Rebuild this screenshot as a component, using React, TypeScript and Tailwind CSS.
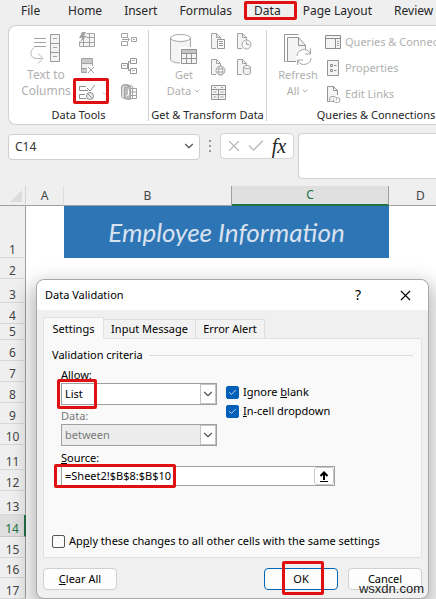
import type { ReactNode } from "react"
import { useState } from "react"
import { Check, ChevronDown, X } from "lucide-react"

const TABS = ["File", "Home", "Insert", "Formulas", "Data", "Page Layout", "Review"]

const ROWS = [
  { n: 2, height: "h-[21px]" },
  { n: 3, height: "h-[24px]" },
  { n: 4, height: "h-[21px]" },
  { n: 5, height: "h-[16px]" },
  { n: 6, height: "h-[21px]" },
  { n: 7, height: "h-[21px]" },
  { n: 8, height: "h-[21px]" },
  { n: 9, height: "h-[21px]" },
  { n: 10, height: "h-[21px]" },
  { n: 11, height: "h-[25px]" },
  { n: 12, height: "h-[21px]" },
  { n: 13, height: "h-[24px]" },
  { n: 14, height: "h-[22px]" },
  { n: 15, height: "h-[21px]" },
  { n: 16, height: "h-[20px]" },
  { n: 17, height: "h-[21px]" },
]

// Red frame drawn over the step that has to be clicked
function Highlight({ className }: { className: string }) {
  return <span className={`absolute z-10 border-3 border-[#e01010] rounded-[2px] pointer-events-none ${className}`} />
}

function Art({ w, h, children }: { w: number; h: number; children: ReactNode }) {
  return (
    <svg width={w} height={h} viewBox={`0 0 ${w} ${h}`} fill="none" stroke="#a3a3a3" strokeWidth="1" aria-hidden="true">
      {children}
    </svg>
  )
}

function TextToColumnsIcon() {
  return (
    <Art w={32} h={32}>
      <path d="M4 4.500h12M4 8.500h12M4 12.500h12" />
      <path d="M20.500 .5h9v27h-9zM20.500 9.500h9M20.500 18.500h9" fill="#f3f3f3" stroke="#999" />
      <path d="M23 4.500h4M23 13.500h4M23 22.500h4" />
      <path d="M4 13.500C-.5 17 0 24 6 24.500h6M8 19.500l5 5-5 5" stroke="#b8b8b8" />
    </Art>
  )
}

function FlashFillIcon() {
  return (
    <Art w={16} h={16}>
      <path d="M7.500 1.500h8v13h-15v-5M.5 10.500h15M4.500 6v8.500M10.500 1.500v13M7.500 5.500h8" fill="#f3f3f3" />
      <path d="M3 0h4L5 4h3L1 10l2-4H0z" fill="#a3a3a3" stroke="none" />
    </Art>
  )
}

function RemoveDuplicatesIcon() {
  return (
    <Art w={16} h={16}>
      <path d="M2.500.5h11v14h-11z" fill="#f0f0f0" />
      <path d="M3 1h10v4H3zM3 10h6v4H3z" fill="#c9c9c9" stroke="none" />
      <path d="M2.500 5.500h11M2.500 10.500h7" />
      <path d="M8 8h8v8H8z" fill="#fff" stroke="none" />
      <path d="M9 9l6 6M15 9l-6 6" />
    </Art>
  )
}

function ValidationIcon() {
  return (
    <Art w={16} h={16}>
      <path d="M7 2.500H.5v4H9M6 10.500H.5v4H7M8 4l3 3 5-6" stroke="#8f8f8f" />
      <circle cx="11" cy="12" r="3.500" fill="#eee" stroke="#8f8f8f" />
      <path d="M8.500 9.500l5 5" stroke="#8f8f8f" />
    </Art>
  )
}

function ConsolidateIcon() {
  return (
    <Art w={16} h={16}>
      <path d="M.5 1.500h6v4h-6zM.5 9.500h6v4h-6zM10.500 5.500h5v4h-5zM1 7.500h7M6.500 5.500l2 2-2 2M12 7.500h2" />
    </Art>
  )
}

function RelationshipsIcon() {
  return (
    <Art w={16} h={16}>
      <path d="M9.500.5h6v5h-6zM9.500 10.500h6v5h-6zM.5 5.500h6v5h-6zM6.500 8.500h1M9.500 3.500h-2v9h2" stroke="#949494" />
      <path d="M11 2.500h3M11 12.500h3M2 7.500h3" stroke="#b0b0b0" />
    </Art>
  )
}

function DataModelIcon() {
  return (
    <Art w={16} h={16}>
      <path d="M.5 3v9c0 2 3 3 7 3V1C3 0 .5 1 .5 3z" fill="#ddd" />
      <path d="M7.500 4.500h8v10h-8M11.500 4v11M8 8h8M8 11.500h8M.5 3C3 .5 10 .5 12 3v1.500" />
      <path d="M3.500 3.500l6-1v13l-6-1z" fill="#bbb" />
      <path d="M7.500 5.500v5q0 2-2 1" stroke="#fff" />
    </Art>
  )
}

function GetDataIcon() {
  return (
    <Art w={28} h={31}>
      <path d="M.5 4v21c0 3 5 4 10 4s10-1 10-4V4" fill="#f4f4f4" />
      <ellipse cx="10.500" cy="4" rx="10" ry="3.500" fill="#fff" />
      <path d="M10 13h18v18H10z" fill="#fff" stroke="none" />
      <path d="M11.500 15.500h15v14h-15z" fill="#f4f4f4" stroke="#949494" />
      <path d="M11.500 15.500h15v4h-15z" fill="#c4c4c4" stroke="#949494" />
      <path d="M16.500 19v10.500M21.500 19v10.500M11.500 24.500h15" stroke="#949494" />
    </Art>
  )
}

function PageShape() {
  return (
    <>
      <path d="M5 15.500H.5V.5h5l4 4V7" fill="#f4f4f4" />
      <path d="M5.500.5v4h4" />
    </>
  )
}

function TextSourceIcon() {
  return (
    <Art w={15} h={17}>
      <PageShape />
      <path d="M6.500 6.500h7v9h-7zM8 8.500h4M8 10.500h4M8 12.500h4" fill="#fff" stroke="#969696" />
    </Art>
  )
}

function RecentSourceIcon() {
  return (
    <Art w={15} h={17}>
      <PageShape />
      <circle cx="9.500" cy="11.500" r="4.500" fill="#f8f8f8" />
      <path d="M9.500 8.500v3h3" />
    </Art>
  )
}

function WebSourceIcon() {
  return (
    <Art w={15} h={17}>
      <PageShape />
      <circle cx="9.500" cy="11.500" r="4.500" fill="#fff" />
      <ellipse cx="9.500" cy="11.500" rx="2" ry="4.500" />
      <path d="M5.500 10h8M5.500 13h8" />
    </Art>
  )
}

function DatabaseSourceIcon() {
  return (
    <Art w={15} h={17}>
      <PageShape />
      <path d="M6.500 8v6c0 2 7 2 7 0V8" fill="#f0f0f0" />
      <ellipse cx="10" cy="8" rx="3.500" ry="1.500" fill="#fff" />
    </Art>
  )
}

function TableSourceIcon() {
  return (
    <Art w={15} h={16}>
      <path d="M.5.5h14v14H.5zM.5 4.500h14M.5 9.500h14M7.500 4.500v10" fill="#f4f4f4" stroke="#949494" />
      <path d="M3 2.500h2M10 2.500h2M2.500 7h3M9.500 7h3M2.500 12h3M9.500 12h3" />
    </Art>
  )
}

function RefreshIcon() {
  return (
    <Art w={28} h={31}>
      <path d="M2.500 27.500h-2V.5h14" stroke="#949494" />
      <path d="M12 27.500H3.500v-24h11l7 8V15" fill="#f4f4f4" stroke="#949494" />
      <path d="M14.500 3.500v8h7" stroke="#949494" />
      <circle cx="20" cy="23" r="8" fill="#fff" stroke="none" />
      <path d="M13 22a7 7 0 0 1 13-3M26.500 14.500V20H21M27 24a7 7 0 0 1-13 3M13.500 31v-5H19" />
    </Art>
  )
}

function QueriesIcon() {
  return (
    <Art w={16} h={15}>
      <path d="M.5.5h15v13H.5zM.5 3.500h15M10.500 3.500v10" fill="#f4f4f4" stroke="#8c8c8c" />
      <path d="M12 6.500h2M12 8.500h2M12 10.500h2" />
    </Art>
  )
}

function PropertiesIcon() {
  return (
    <Art w={16} h={16}>
      <path d="M2.500.5h11v15h-11z" fill="#f4f4f4" stroke="#949494" />
      <path d="M5.500 4.500h2v2h-2zM5.500 9.500h2v2h-2zM9 5.500h2.500M9 10.500h2.500" stroke="#8c8c8c" />
    </Art>
  )
}

function EditLinksIcon() {
  return (
    <Art w={16} h={17}>
      <path d="M5 15.500H2.500V.5h6l4 4V9" fill="#f4f4f4" stroke="#949494" />
      <path d="M8.500.5v4h4" stroke="#949494" />
      <path d="M9 15.500H7a2.500 2.500 0 0 1 0-5h2a2.500 2.500 0 0 1 2 4M11.500 11.500h1a2.500 2.500 0 0 1 0 5h-2a2.500 2.500 0 0 1-1.500-4" />
    </Art>
  )
}

function ToolButton({ label, children }: { label: string; children: ReactNode }) {
  return (
    <button type="button" aria-label={label} className="flex h-4 items-center">
      {children}
    </button>
  )
}

function BigButton({ icon, lines, menu, className }: { icon: ReactNode; lines: string[]; menu?: boolean; className: string }) {
  return (
    <button type="button" className={`flex flex-col items-center leading-4 text-[#b0b0b0] ${className}`}>
      <span className="h-[33px]">{icon}</span>
      <span>{lines[0]}</span>
      <span className="flex items-center gap-0.5">
        {lines[1]}
        {menu && <ChevronDown size={8} strokeWidth={3} />}
      </span>
    </button>
  )
}

function LinkButton({ icon, label }: { icon: ReactNode; label: string }) {
  return (
    <button type="button" className="flex h-[18px] items-center gap-1 whitespace-nowrap">
      {icon}
      {label}
    </button>
  )
}

function Group({ title, className, children }: { title: string; className: string; children: ReactNode }) {
  return (
    <section className={`flex shrink-0 flex-col justify-between ${className}`}>
      <div className="flex">{children}</div>
      <h2 className="text-center leading-3 whitespace-nowrap text-[#262626]">{title}</h2>
    </section>
  )
}

function Ribbon() {
  return (
    <div className="ml-2 flex h-[100px] overflow-hidden rounded-l-lg border border-r-0 border-[#d0d0d0] bg-white pt-1 pb-[3px] text-[11px]">
      <Group title="Data Tools" className="w-[140px] border-r border-[#d0d0d0]">
        <BigButton icon={<TextToColumnsIcon />} lines={["Text to", "Columns"]} className="w-[66px] pt-1 pl-2 text-xs leading-4" />
        <div className="flex w-[42px] flex-col gap-2.5 pt-0.5 pl-1">
          <ToolButton label="Flash Fill"><FlashFillIcon /></ToolButton>
          <ToolButton label="Remove Duplicates"><RemoveDuplicatesIcon /></ToolButton>
          <div className="relative flex">
            <ToolButton label="Data Validation"><ValidationIcon /></ToolButton>
            <ChevronDown size={7} className="mt-1.5 ml-1.5 text-[#a3a3a3]" />
            <Highlight className="-top-1.5 -left-1.5 h-[26px] w-9" />
          </div>
        </div>
        <div className="flex flex-col gap-2.5 pt-0.5 pl-1">
          <ToolButton label="Consolidate"><ConsolidateIcon /></ToolButton>
          <ToolButton label="Relationships"><RelationshipsIcon /></ToolButton>
          <ToolButton label="Manage Data Model"><DataModelIcon /></ToolButton>
        </div>
      </Group>
      <Group title="Get & Transform Data" className="w-[118px] border-r border-[#d0d0d0]">
        <BigButton icon={<GetDataIcon />} lines={["Get", "Data"]} menu className="w-[62px] pt-1 pl-2" />
        <div className="grid grid-cols-[26px_16px] content-start gap-y-2.5 pt-[3px]">
          <ToolButton label="From Text/CSV"><TextSourceIcon /></ToolButton>
          <ToolButton label="Recent Sources"><RecentSourceIcon /></ToolButton>
          <ToolButton label="From Web"><WebSourceIcon /></ToolButton>
          <ToolButton label="Existing Connections"><DatabaseSourceIcon /></ToolButton>
          <ToolButton label="From Table/Range"><TableSourceIcon /></ToolButton>
        </div>
      </Group>
      <Group title="Queries & Connections" className="w-[218px]">
        <BigButton icon={<RefreshIcon />} lines={["Refresh", "All"]} menu className="w-[58px] pt-1 pl-1" />
        <div className="flex flex-col gap-2 pt-[3px] text-[#b0b0b0]">
          <LinkButton icon={<QueriesIcon />} label="Queries & Connections" />
          <LinkButton icon={<PropertiesIcon />} label="Properties" />
          <LinkButton icon={<EditLinksIcon />} label="Edit Links" />
        </div>
      </Group>
    </div>
  )
}

function FormulaBar() {
  return (
    <div className="flex h-[53px] items-start pl-2">
      <div className="relative w-48">
        <input
          aria-label="Name Box"
          defaultValue="C14"
          className="h-[26px] w-full rounded-[4px] border border-[#cfcfcf] bg-white pl-1.5 text-xs text-[#333]"
        />
        <ChevronDown size={14} className="pointer-events-none absolute top-1.5 right-1 text-[#555]" />
      </div>
      <div className="flex h-[26px] w-5 flex-col items-center justify-center gap-[3px]">
        <i className="size-0.5 bg-[#999]" />
        <i className="size-0.5 bg-[#999]" />
        <i className="size-0.5 bg-[#999]" />
      </div>
      <div className="flex h-[26px] w-[74px] items-center justify-between rounded-[4px] border border-[#d4d4d4] bg-white px-1">
        <button type="button" aria-label="Cancel entry"><X size={18} strokeWidth={1.5} className="text-[#b5b5b5]" /></button>
        <button type="button" aria-label="Enter"><Check size={20} strokeWidth={1.5} className="text-[#b5b5b5]" /></button>
        <button type="button" className="w-5 font-['Liberation_Serif',serif] text-xl leading-5 text-[#222] italic">fx</button>
      </div>
      <textarea
        aria-label="Formula"
        className="ml-1 h-[46px] min-w-0 flex-1 resize-none rounded-l-[4px] border border-r-0 border-[#cfcfcf] bg-white"
      />
    </div>
  )
}

function Sheet() {
  return (
    <table className="w-full table-fixed border-separate border-spacing-0 bg-white text-xs text-[#444]">
      <colgroup>
        <col className="w-[26px]" />
        <col className="w-[38px]" />
        <col className="w-[168px]" />
        <col className="w-[157px]" />
        <col />
      </colgroup>
      <thead>
        <tr className="h-5 bg-[#efefef] leading-4">
          <th className="border-r border-b border-r-[#d4d4d4] border-b-[#a0a0a0] p-0">
            <svg width="12" height="12" viewBox="0 0 12 12" className="ml-2.5" aria-hidden="true">
              <path d="M12 0v12H0z" fill="#dcdcdc" />
            </svg>
          </th>
          <th className="border-r border-b border-r-[#dcdcdc] border-b-[#a0a0a0] p-0 font-normal">A</th>
          <th className="border-r border-b border-[#a0a0a0] p-0 font-normal">B</th>
          <th className="border-r border-b-2 border-r-[#a0a0a0] border-b-[#217346] bg-[#e0e0e0] p-0 font-normal text-[#217346]">C</th>
          <th className="border-b border-[#a0a0a0] p-0 pl-4 font-normal">D</th>
        </tr>
      </thead>
      <tbody className="leading-[15px]">
        <tr className="h-[52px]">
          <th className="border-r border-b border-r-[#a0a0a0] border-b-[#d8d8d8] bg-[#efefef] p-0 align-bottom font-normal">1</th>
          <td />
          <td colSpan={2} className="bg-[#2e75b6] p-0 text-center font-['Lato',sans-serif] text-[26px] leading-8 text-[#d9e2ef] italic">
            Employee Information
          </td>
          <td />
        </tr>
        {ROWS.map((row) => (
          <tr key={row.n} className={row.height}>
            <th
              className={
                row.n === 14
                  ? "border-r-2 border-b border-r-[#217346] border-b-[#c8c8c8] bg-[#dedede] p-0 align-bottom font-normal text-[#217346]"
                  : "border-r border-b border-r-[#a0a0a0] border-b-[#d8d8d8] bg-[#efefef] p-0 align-bottom font-normal"
              }
            >
              {row.n}
            </th>
            <td colSpan={4} className="p-0" />
          </tr>
        ))}
      </tbody>
    </table>
  )
}

function SelectBox({ id, options, disabled }: { id: string; options: string[]; disabled?: boolean }) {
  return (
    <div className="relative w-[156px]">
      <select
        id={id}
        disabled={disabled}
        className="h-[22px] w-full appearance-none border border-[#a0a0a0] bg-white pl-[3px] leading-4 text-black disabled:bg-[#ececec] disabled:text-[#7a7a7a] disabled:opacity-100"
      >
        {options.map((option) => (
          <option key={option}>{option}</option>
        ))}
      </select>
      <span className="pointer-events-none absolute inset-y-px right-px flex w-4 items-center justify-center border border-[#c4c4c4] bg-white">
        <ChevronDown size={14} strokeWidth={2} className="shrink-0 text-[#555]" />
      </span>
    </div>
  )
}

function CheckBox({ checked, onChange, children }: { checked: boolean; onChange: (value: boolean) => void; children: ReactNode }) {
  return (
    <label className="flex items-center gap-1">
      <span className="relative flex size-[13px] items-center justify-center">
        <input
          type="checkbox"
          checked={checked}
          onChange={(e) => onChange(e.target.checked)}
          className="size-[13px] appearance-none rounded-[2px] border border-[#555] bg-[#fafafa] checked:border-[#005fb8] checked:bg-[#005fb8]"
        />
        {checked && <Check size={9} strokeWidth={2} className="pointer-events-none absolute text-white" />}
      </span>
      <span className="whitespace-nowrap">{children}</span>
    </label>
  )
}

function ValidationDialog() {
  const [ignoreBlank, setIgnoreBlank] = useState(true)
  const [inCell, setInCell] = useState(true)
  const [applyAll, setApplyAll] = useState(false)

  return (
    <div
      role="dialog"
      aria-label="Data Validation"
      className="absolute top-[279px] right-[7px] left-[36px] rounded-lg border border-[#a8a8a8] bg-[#f0f0f0] text-[11px] leading-4 text-black shadow-[0_10px_20px_6px_rgba(0,0,0,0.26)]"
    >
      <header className="flex h-[30px] items-center rounded-t-lg bg-white pr-3.5 pl-2">
        <h1 className="flex-1">Data Validation</h1>
        <button type="button" aria-label="Help" className="mr-9 text-sm leading-4">?</button>
        <button type="button" aria-label="Close"><X size={17} strokeWidth={1.5} /></button>
      </header>

      <div className="px-[6px] pt-[7px] pb-2">
        <div role="tablist" className="flex items-end">
          <button type="button" role="tab" aria-selected="true" className="relative z-[1] -mb-px h-[22px] w-[61px] border border-b-0 border-[#e2e2e2] bg-[#f9f9f9]">
            Settings
          </button>
          <button type="button" role="tab" aria-selected="false" className="h-[19px] w-[92px] border-t border-r border-[#dedede] bg-[#f2f2f2]">Input Message</button>
          <button type="button" role="tab" aria-selected="false" className="h-[19px] w-[69px] border-t border-r border-[#dedede] bg-[#f2f2f2]">Error Alert</button>
        </div>

        <div className="border border-[#e2e2e2] bg-[#f9f9f9] px-2 pt-2 pb-2">
          <div className="flex items-center gap-1.5">
            <span>Validation criteria</span>
            <span className="h-px flex-1 bg-[#dcdcdc]" />
          </div>

          <div className="flex gap-[9px] pt-1 pl-[9px]">
            <div className="flex flex-col">
              <label htmlFor="allow" className="leading-4"><u>A</u>llow:</label>
              <div className="relative">
                <SelectBox id="allow" options={["List", "Any value", "Whole number"]} />
                <Highlight className="-top-1 -left-1 h-[30px] w-10" />
              </div>
              <label htmlFor="data" className="pt-[3px] leading-4 text-[#777]">Data:</label>
              <SelectBox id="data" options={["between", "not between"]} disabled />
            </div>
            <div className="flex flex-col gap-[3px] pt-[17px]">
              <CheckBox checked={ignoreBlank} onChange={setIgnoreBlank}>Ignore <u>b</u>lank</CheckBox>
              <CheckBox checked={inCell} onChange={setInCell}><u>I</u>n-cell dropdown</CheckBox>
            </div>
          </div>

          <div className="pt-1 pl-[9px]">
            <label htmlFor="source" className="block"><u>S</u>ource:</label>
            <div className="relative flex h-5 w-[274px] border border-[#a0a0a0] bg-white">
              <input id="source" defaultValue="=Sheet2!$B$8:$B$10" className="min-w-0 flex-1 pl-[3px]" />
              <button type="button" aria-label="Collapse dialog" className="flex w-5 items-center justify-center rounded-[3px] border border-[#c8c8c8]">
                <svg width="10" height="11" viewBox="0 0 10 11" fill="none" stroke="#000" aria-hidden="true">
                  <path d="M5 9V2M1.500 5L5 1.500 8.500 5" strokeWidth="2" />
                  <path d="M1 10.500h8" />
                </svg>
              </button>
              <Highlight className="-top-[3px] -left-2 h-6 w-[122px]" />
            </div>
          </div>

          <div className="pt-[47px]">
            <CheckBox checked={applyAll} onChange={setApplyAll}>
              Ap<u>p</u>ly these changes to all other cells with the same settings
            </CheckBox>
          </div>
        </div>

        <footer className="flex justify-between pt-2.5">
          <button type="button" className="h-[22px] w-[74px] rounded-[4px] border border-[#d0d0d0] bg-[#fdfdfd]"><u>C</u>lear All</button>
          <div className="flex gap-2.5">
            <button type="button" className="relative h-[22px] w-[74px] rounded-[4px] border border-[#0067b8] bg-[#fdfdfd]">
              OK
              <Highlight className="-top-2 left-[17px] h-[34px] w-[42px]" />
            </button>
            <button type="button" className="h-[22px] w-[74px] rounded-[4px] border border-[#d0d0d0] bg-[#fdfdfd]">Cancel</button>
          </div>
        </footer>
      </div>
    </div>
  )
}

export default function App() {
  return (
    <main className="relative h-screen overflow-hidden bg-[#efefef] font-['Noto_Sans',sans-serif]">
      <nav className="flex h-[25px] items-center gap-[22px] pb-1 pl-[21px] text-xs leading-5 whitespace-nowrap text-[#262626]">
        {TABS.map((tab) => (
          <a key={tab} href="#" className="relative min-w-[25px]">
            {tab}
            {tab === "Data" && <Highlight className="top-0 -left-2.5 h-[19px] w-[53px]" />}
          </a>
        ))}
      </nav>
      <Ribbon />
      <div className="pt-2">
        <FormulaBar />
      </div>
      <Sheet />
      <ValidationDialog />
      <span className="absolute right-3 bottom-0.5 font-['Liberation_Sans',sans-serif] text-[13px] leading-4 text-[#222]">wsxdn.com</span>
    </main>
  )
}
